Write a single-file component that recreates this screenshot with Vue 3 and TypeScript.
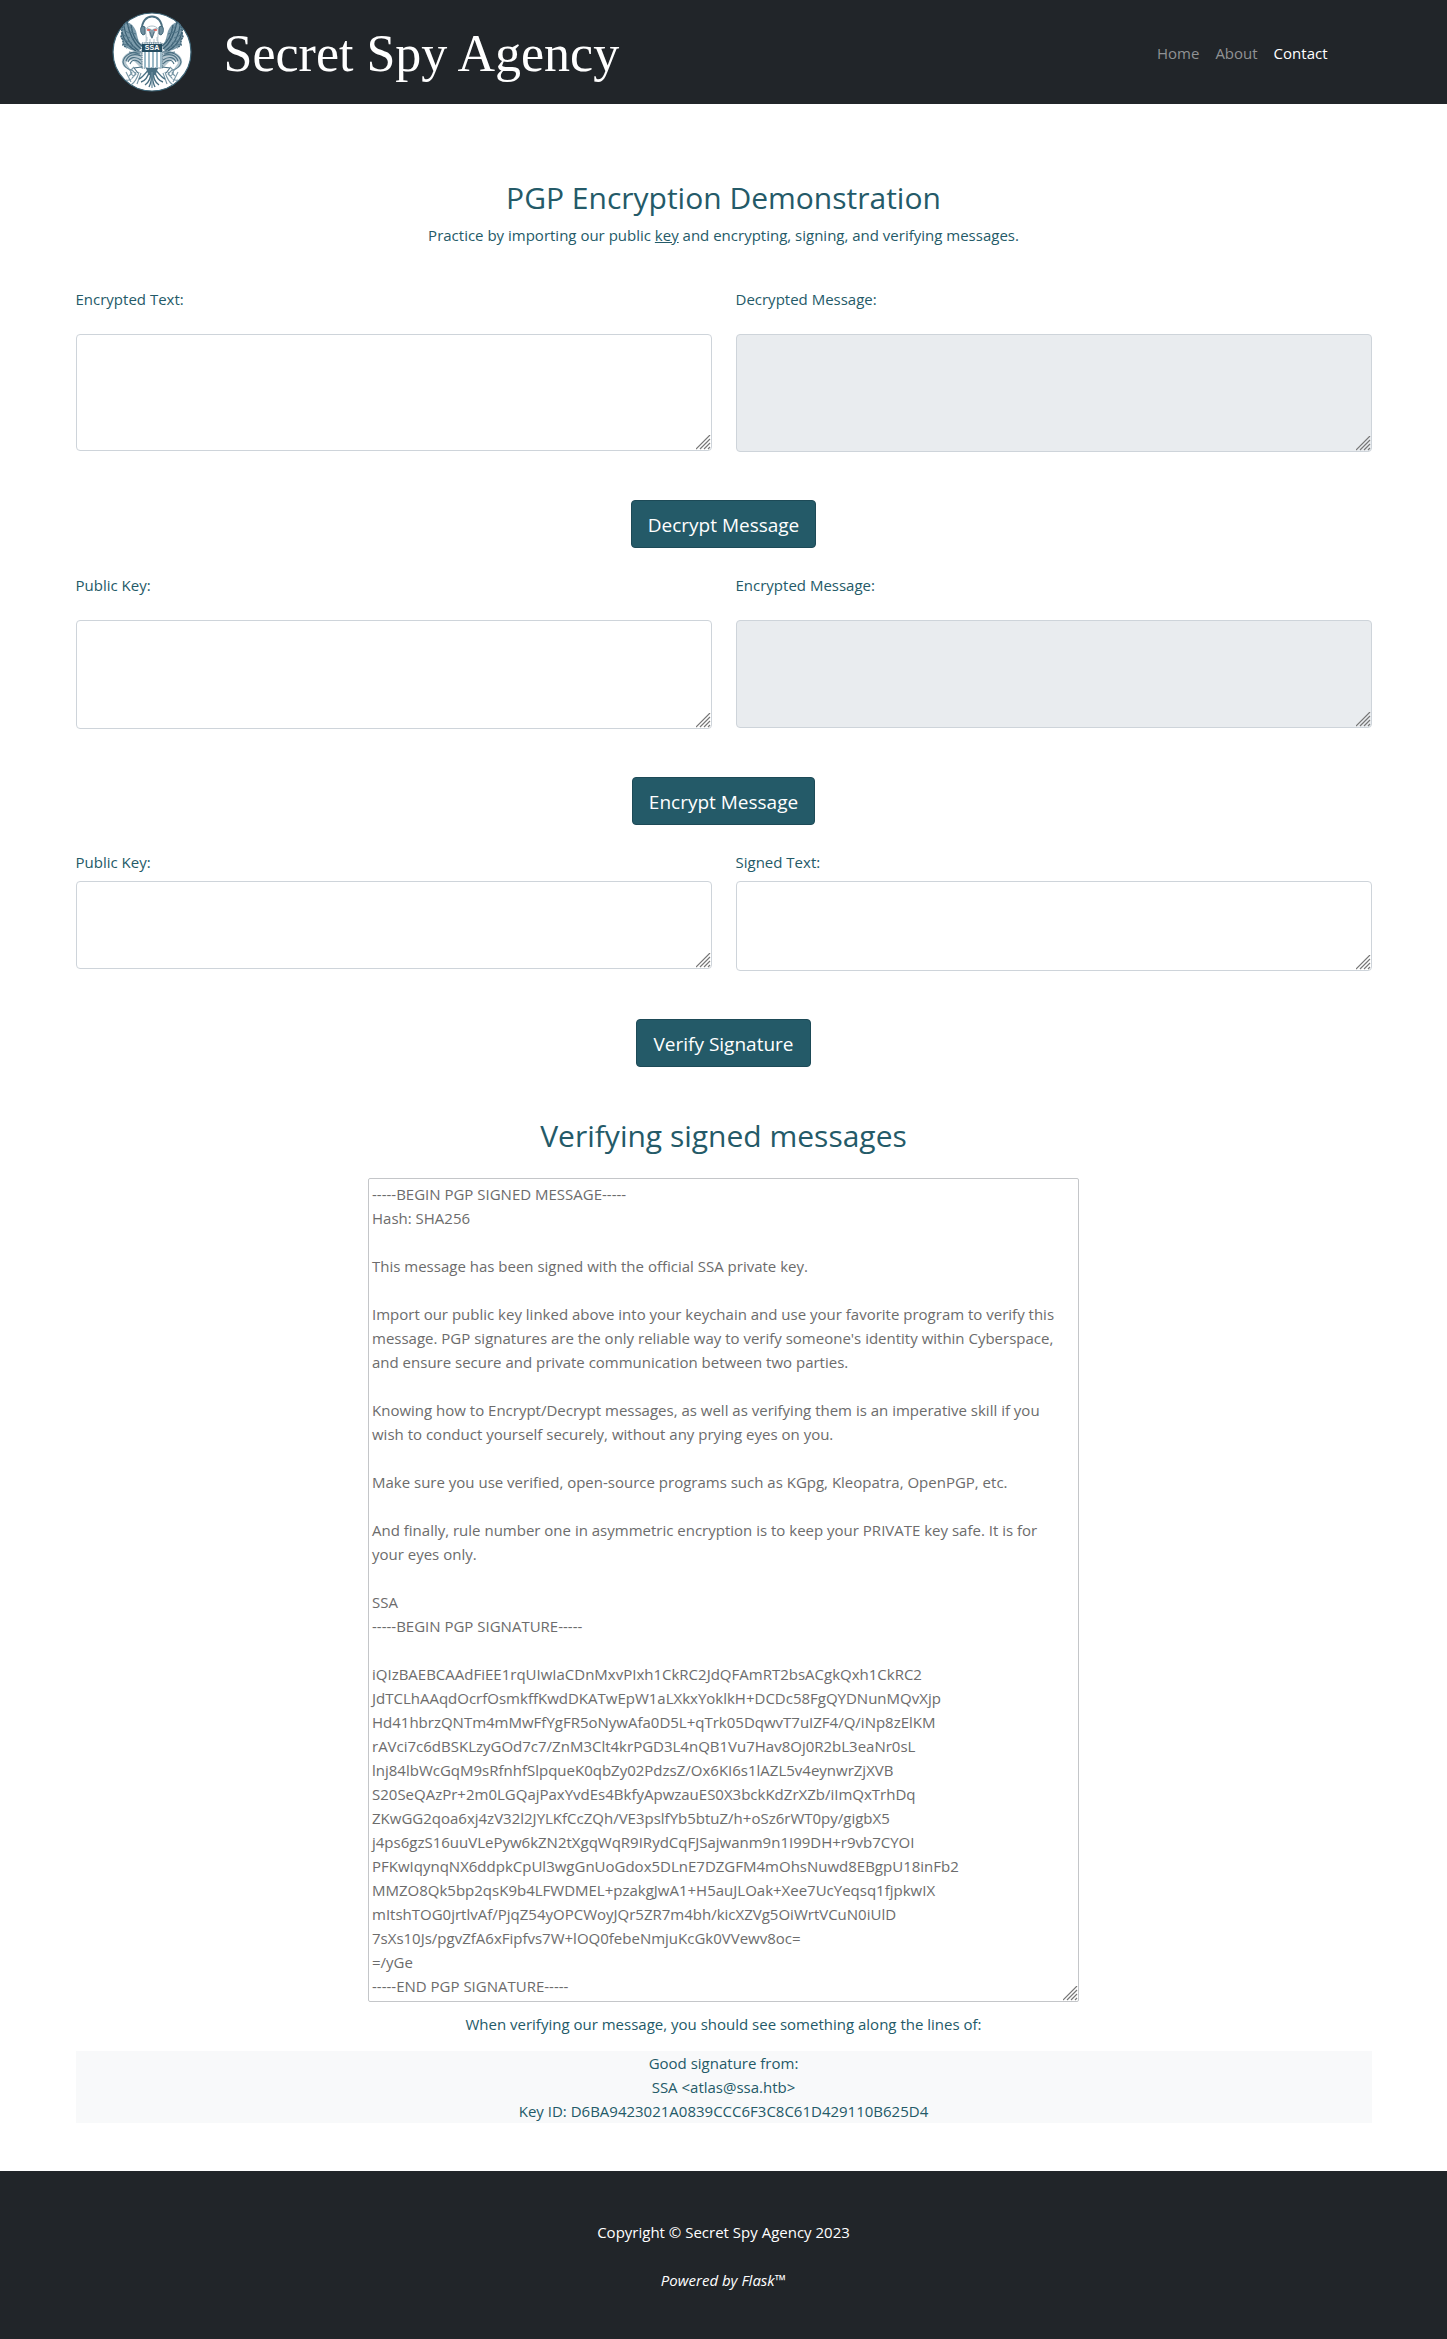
<script setup lang="ts">
interface Field {
  id: string
  label: string
  height: number
  readonly?: boolean
}

interface Panel {
  action: string
  compact?: boolean
  fields: Field[]
}

const panels: Panel[] = [
  {
    action: 'Decrypt Message',
    fields: [
      { id: 'encrypted-text', label: 'Encrypted Text:', height: 117 },
      { id: 'decrypted-message', label: 'Decrypted Message:', height: 118, readonly: true },
    ],
  },
  {
    action: 'Encrypt Message',
    fields: [
      { id: 'public-key', label: 'Public Key:', height: 109 },
      { id: 'encrypted-message', label: 'Encrypted Message:', height: 108, readonly: true },
    ],
  },
  {
    action: 'Verify Signature',
    compact: true,
    fields: [
      { id: 'verify-key', label: 'Public Key:', height: 88 },
      { id: 'signed-text', label: 'Signed Text:', height: 90 },
    ],
  },
]

const signedMessage = `-----BEGIN PGP SIGNED MESSAGE-----
Hash: SHA256

This message has been signed with the official SSA private key.

Import our public key linked above into your keychain and use your favorite program to verify this message. PGP signatures are the only reliable way to verify someone's identity within Cyberspace, and ensure secure and private communication between two parties.

Knowing how to Encrypt/Decrypt messages, as well as verifying them is an imperative skill if you wish to conduct yourself securely, without any prying eyes on you.

Make sure you use verified, open-source programs such as KGpg, Kleopatra, OpenPGP, etc.

And finally, rule number one in asymmetric encryption is to keep your PRIVATE key safe. It is for your eyes only.

SSA
-----BEGIN PGP SIGNATURE-----

iQIzBAEBCAAdFiEE1rqUIwIaCDnMxvPIxh1CkRC2JdQFAmRT2bsACgkQxh1CkRC2
JdTCLhAAqdOcrfOsmkffKwdDKATwEpW1aLXkxYoklkH+DCDc58FgQYDNunMQvXjp
Hd41hbrzQNTm4mMwFfYgFR5oNywAfa0D5L+qTrk05DqwvT7uIZF4/Q/iNp8zElKM
rAVci7c6dBSKLzyGOd7c7/ZnM3Clt4krPGD3L4nQB1Vu7Hav8Oj0R2bL3eaNr0sL
lnj84lbWcGqM9sRfnhfSlpqueK0qbZy02PdzsZ/Ox6KI6s1lAZL5v4eynwrZjXVB
S20SeQAzPr+2m0LGQajPaxYvdEs4BkfyApwzauES0X3bckKdZrXZb/iImQxTrhDq
ZKwGG2qoa6xj4zV32l2JYLKfCcZQh/VE3pslfYb5btuZ/h+oSz6rWT0py/gigbX5
j4ps6gzS16uuVLePyw6kZN2tXgqWqR9IRydCqFJSajwanm9n1I99DH+r9vb7CYOI
PFKwIqynqNX6ddpkCpUl3wgGnUoGdox5DLnE7DZGFM4mOhsNuwd8EBgpU18inFb2
MMZO8Qk5bp2qsK9b4LFWDMEL+pzakgJwA1+H5auJLOak+Xee7UcYeqsq1fjpkwIX
mItshTOG0jrtlvAf/PjqZ54yOPCWoyJQr5ZR7m4bh/kicXZVg5OiWrtVCuN0iUlD
7sXs10Js/pgvZfA6xFipfvs7W+lOQ0febeNmjuKcGk0VVewv8oc=
=/yGe
-----END PGP SIGNATURE-----`
</script>

<template>
  <div class="page">
    <header class="navbar">
      <div class="navbar-inner">
        <a class="brand" href="#">
          <svg class="seal" viewBox="0 0 80 80" aria-hidden="true">
            <defs>
              <g id="seal-half">
                <!-- wing -->
                <path d="M15 10 C11 12 9 16 10 21 L9 25 11 29 11 33 15 36 19 38 27 40 30 33 C26 30 26 26 24 19 C22 14 19 11 15 10Z" fill="#7c9bab" />
                <path d="M15 10 C17 20 20 30 29 37 M12 14 C13 23 18 33 27 39 M10 20 C12 29 17 35 24 39 M19 13 C20 22 23 29 30 34" stroke="#3b6074" stroke-width="1.3" fill="none" />
                <path d="M10 17 L17 21 M9 22 L18 26 M10 27 L20 31 M11 32 L23 35 M15 13 L21 18 M18 20 L24 22 M20 26 L26 28" stroke="#527689" stroke-width="1" fill="none" />
                <path d="M15 10 C11 13 9 17 10 22 L9 25 11 28 11 33 15 36" stroke="#41667a" stroke-width="1.6" stroke-dasharray="2 1" fill="none" />
                <!-- leg and branch -->
                <path d="M30 39 C21 38 12 41 10 48 C9 53 13 57 18 57 L14 51 C15 48 19 47 23 50 L30 57Z" fill="#b4c6cf" />
                <path d="M29 40 C20 39 12 43 11 50 C12 55 15 57 19 58 M29 44 C22 41 16 43 14 49 M29 48 C23 44 18 45 16 50 M29 52 C25 47 20 47 18 52 M28 42 L17 40 M30 55 L22 56 26 61" stroke="#4c7184" stroke-width="1.1" fill="none" />
                <path d="M16 56 L20 61 17 64 M20 58 L24 62 20 66 M22 55 C18 58 17 62 22 64 M24 60 C22 66 18 69 14 68 M27 60 C25 67 22 71 19 73 M29 61 L25 72 M14 60 L19 70" stroke="#7897a6" stroke-width="1.1" fill="none" />
                <!-- tail feathers -->
                <path d="M38 58 C36 65 33 69 29 70 M37 57 C33 62 31 65 27 67 M39 59 C39 67 36 71 33 73 M40 60 C40 69 38 73 37 75" stroke="#496f82" stroke-width="1.4" fill="none" />
              </g>
            </defs>
            <circle cx="40" cy="40" r="39" fill="#fff" stroke="#3d6476" stroke-width="1.2" />
            <use href="#seal-half" />
            <use href="#seal-half" transform="translate(80 0) scale(-1 1)" />
            <path d="M34 56 L46 56 44 62 40 65 36 62Z" fill="#496f82" />
            <path d="M40 60 V76" stroke="#6c8d9e" stroke-width="1.2" />
            <!-- head and headphones -->
            <path d="M34 31 C35 25 33 21 34 17 C36 13 44 13 46 17 C47 21 45 25 46 31Z" fill="#fff" stroke="#aebfc8" stroke-width="1" />
            <path d="M35 29 V25 M38 31 V27 M42 31 V27 M45 29 V25" stroke="#b4c6cf" />
            <path d="M30 18 C29 0 51 0 50 18" fill="none" stroke="#4b6f81" stroke-width="2" />
            <path d="M30 14 C28 16 28 21 31 23 L33 22 V15Z M50 14 C52 16 52 21 49 23 L47 22 V15Z" fill="#6f8d9d" stroke="#426779" />
            <path d="M35 16 L39 17 40 18 41 17 45 16 43 20 41 25 40 27 38 24 37 20Z" fill="#89a0ad" />
            <path d="M35 18 h3 M42 18 h3" stroke="#ee554c" stroke-width="1.5" />
            <path d="M38 20 L40 26 42 20" fill="none" stroke="#557585" stroke-width="1" />
            <!-- shield -->
            <path d="M30 31 H50 V56 H30Z" fill="#fff" stroke="#41667a" stroke-dasharray="1.5 .7" />
            <path d="M33 40 V56 M37 40 V56 M41 40 V56 M45 40 V56 M49 40 V56" stroke="#9dbac8" stroke-width="2" />
            <path d="M30 32 H50 V40 H30Z" fill="#254c60" />
            <text x="40" y="38" text-anchor="middle" class="seal-text">SSA</text>
          </svg>
          <span>Secret Spy Agency</span>
        </a>
        <nav class="nav" aria-label="Main">
          <a href="#">Home</a>
          <a href="#">About</a>
          <a href="#" class="active" aria-current="page">Contact</a>
        </nav>
      </div>
    </header>

    <main class="container">
      <h1>PGP Encryption Demonstration</h1>
      <p class="intro">
        Practice by importing our public <a href="#">key</a> and encrypting, signing, and verifying messages.
      </p>

      <form
        v-for="panel in panels"
        :key="panel.action"
        class="panel"
        :class="{ compact: panel.compact }"
        @submit.prevent
      >
        <div class="fields">
          <div v-for="field in panel.fields" :key="field.id" class="field">
            <label :for="field.id">{{ field.label }}</label>
            <textarea
              :id="field.id"
              :readonly="field.readonly"
              :style="{ height: `${field.height}px` }"
            ></textarea>
          </div>
        </div>
        <button type="submit">{{ panel.action }}</button>
      </form>

      <section class="verify">
        <h2 id="verify-title">Verifying signed messages</h2>
        <textarea class="message" rows="34" readonly aria-labelledby="verify-title" :value="signedMessage"></textarea>
        <p class="hint">When verifying our message, you should see something along the lines of:</p>
        <p class="result">
          Good signature from:<br />
          SSA &lt;atlas@ssa.htb&gt;<br />
          Key ID: D6BA9423021A0839CCC6F3C8C61D429110B625D4
        </p>
      </section>
    </main>

    <footer class="footer">
      <p>Copyright © Secret Spy Agency 2023</p>
      <p><em>Powered by Flask™</em></p>
    </footer>
  </div>
</template>

<style>
body {
  margin: 0;
  background: #fff;
}
</style>

<style scoped>
.page {
  color: #245a68;
  font-family: "Open Sans", "Noto Sans", sans-serif;
  font-size: 15px;
  line-height: 24px;
}

.page * {
  box-sizing: border-box;
}

h1,
h2,
p {
  margin: 0;
}

.navbar {
  padding: 12px 24px;
  background: #212529;
}

.navbar-inner {
  display: flex;
  align-items: center;
  justify-content: space-between;
  max-width: 1224px;
  margin: 0 auto;
}

.brand {
  display: flex;
  align-items: center;
  gap: 32px;
  color: #fff;
  font-family: "Liberation Serif", serif;
  font-size: 52px;
  line-height: 76px;
  text-decoration: none;
}

.brand span {
  padding-top: 4px;
}

.seal {
  width: 80px;
  height: 80px;
}

.seal-text {
  fill: #fff;
  font: bold 7px "Liberation Sans", sans-serif;
}

.nav {
  display: flex;
  padding-top: 2px;
}

.nav a {
  padding: 0 8px;
  color: #909294;
  text-decoration: none;
}

.nav a.active {
  color: #fff;
}

.container {
  max-width: 1344px;
  margin: 0 auto;
  padding: 75px 24px 48px;
}

h1,
h2 {
  font-size: 30px;
  font-weight: 400;
  line-height: 38px;
  text-align: center;
}

.intro {
  margin: 6px 0 40px;
  text-align: center;
}

.intro a {
  color: inherit;
}

.panel {
  display: flex;
  flex-direction: column;
  align-items: center;
  gap: 48px;
  margin-bottom: 25px;
}

.fields {
  display: grid;
  grid-template-columns: 1fr 1fr;
  gap: 24px;
  width: 100%;
}

.field {
  display: flex;
  flex-direction: column;
  gap: 23px;
}

.compact .field {
  gap: 7px;
}

textarea {
  display: block;
  width: 100%;
  padding: 6px 12px;
  border: 1px solid #ced4da;
  border-radius: 4px;
  outline: none;
  background: #fff;
  color: #212529;
  font: inherit;
  resize: vertical;
}

textarea::-webkit-resizer {
  background: url("data:image/svg+xml,%3Csvg xmlns='http://www.w3.org/2000/svg' width='15' height='15'%3E%3Cpath d='M0 14L14 0M4 14L14 4M8 14L14 8M12 14L14 12' stroke='%23777' stroke-width='1.2'/%3E%3C/svg%3E") no-repeat right bottom;
}

.field textarea:read-only {
  background: #e9ecef;
}

button {
  height: 48px;
  padding: 2px 16px 0;
  border: 1px solid #1d4a57;
  border-radius: 4px;
  background: #245a68;
  color: #fff;
  font: inherit;
  font-size: 19px;
}

.verify {
  padding-top: 25px;
}

.message {
  max-width: 711px;
  margin: 23px auto 10px;
  padding: 3px 12px 3px 3px;
  border-color: #c4c6c9;
  border-radius: 2px;
  color: #6c6c6c;
  overflow: hidden;
  resize: both;
}

.hint {
  margin-bottom: 15px;
  text-align: center;
}

.result {
  background: #f8f9fa;
  text-align: center;
}

.footer {
  display: flex;
  flex-direction: column;
  gap: 24px;
  padding: 49px 24px 47px;
  background: #212529;
  color: #fff;
  text-align: center;
}
</style>
